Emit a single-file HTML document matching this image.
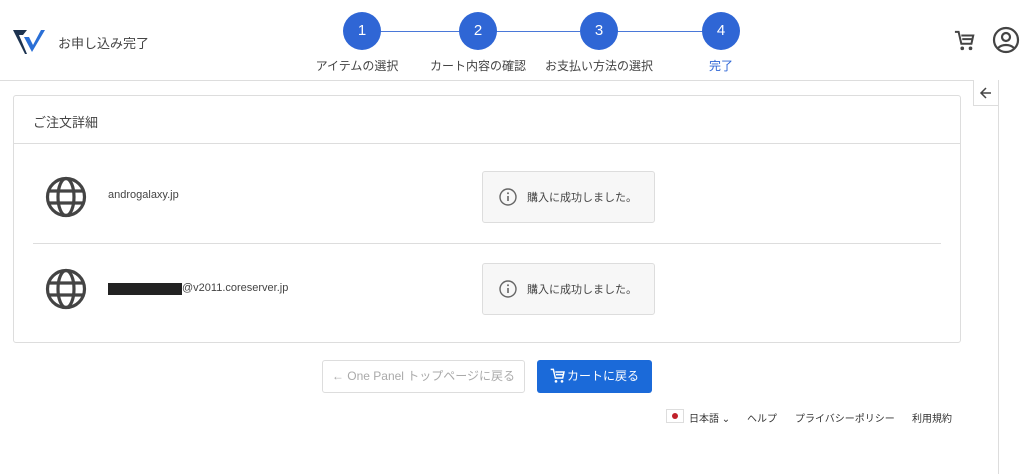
<!DOCTYPE html>
<html><head><meta charset="utf-8"><style>
*{box-sizing:border-box;margin:0;padding:0}
body{width:1024px;height:474px;background:#fff;font-family:"Liberation Sans","Noto Sans CJK JP",sans-serif;color:#333;position:relative;overflow:hidden}
.a{position:absolute}
.circ{position:absolute;width:38px;height:38px;border-radius:50%;background:#2f66d5;color:#fff;font-size:15px;text-align:center;line-height:38px;top:12px}
.line{position:absolute;top:31px;height:1px;background:#4a78d8}
.lab{position:absolute;top:57px;font-size:12px;color:#444;white-space:nowrap;transform:translateX(-50%)}
.msg{position:absolute;left:482px;width:173px;height:52px;border:1px solid #ddd;border-radius:3px;background:#f7f7f7;font-size:11px;color:#444;display:flex;align-items:center}
.msg svg{margin:0 10px 0 16px}
</style></head><body>
<div class="a" style="left:0;top:80px;width:998px;height:1px;background:#ddd"></div>
<div class="a" style="left:998px;top:80px;width:1px;height:394px;background:#ddd"></div>
<div class="a" style="left:973px;top:80px;width:26px;height:26px;border:1px solid #ddd;border-top:none;background:#fff"></div>
<svg class="a" style="left:979px;top:86px" width="14" height="14" viewBox="0 0 14 14"><path d="M12 7H2M7 2L2 7l5 5" stroke="#444" stroke-width="1.5" fill="none"/></svg>
<svg class="a" style="left:13px;top:28px" width="32" height="28" viewBox="0 0 32 28"><path d="M0 2h14l-4 5H6l8 19L12 26z" fill="#1d3350"/><path d="M11 9h5l4 8 8-15h4L19 24z" fill="#2a6fd6"/></svg>
<div class="a" style="left:58px;top:33px;font-size:13px;color:#444">お申し込み完了</div>
<div class="line" style="left:380px;width:80px"></div>
<div class="line" style="left:496px;width:84px"></div>
<div class="line" style="left:617px;width:86px"></div>
<div class="circ" style="left:343px">1</div>
<div class="circ" style="left:459px">2</div>
<div class="circ" style="left:580px">3</div>
<div class="circ" style="left:702px">4</div>
<div class="lab" style="left:357px">アイテムの選択</div>
<div class="lab" style="left:478px">カート内容の確認</div>
<div class="lab" style="left:599px">お支払い方法の選択</div>
<div class="lab" style="left:721px;color:#2f66d5">完了</div>
<svg class="a" style="left:954px;top:30px" width="22" height="22" viewBox="0 0 24 24"><path d="M1 2h4l3 13h11l2-9H8M9 10h11" stroke="#444" stroke-width="2.2" fill="none"/><circle cx="9" cy="20" r="2" fill="#444"/><circle cx="18" cy="20" r="2" fill="#444"/></svg>
<svg class="a" style="left:992px;top:26px" width="28" height="28" viewBox="0 0 28 28"><circle cx="14" cy="14" r="12" stroke="#444" stroke-width="2.2" fill="none"/><circle cx="14" cy="11" r="4" stroke="#444" stroke-width="2.2" fill="none"/><path d="M6 22c4-4 12-4 16 0" stroke="#444" stroke-width="2.2" fill="none"/></svg>
<div class="a" style="left:13px;top:95px;width:948px;height:248px;border:1px solid #ddd;border-radius:3px"></div>
<div class="a" style="left:13px;top:143px;width:948px;height:1px;background:#ddd"></div>
<div class="a" style="left:33px;top:112px;font-size:13px;color:#444">ご注文詳細</div>
<div class="a" style="left:33px;top:243px;width:908px;height:1px;background:#ddd"></div>
<svg class="a" style="left:45px;top:176px" width="42" height="42" viewBox="0 0 42 42"><g stroke="#444" stroke-width="3.2" fill="none"><circle cx="21" cy="21" r="18.5"/><ellipse cx="21" cy="21" rx="8" ry="18.5"/><path d="M3 15h36M3 27h36"/></g></svg>
<svg class="a" style="left:45px;top:268px" width="42" height="42" viewBox="0 0 42 42"><g stroke="#444" stroke-width="3.2" fill="none"><circle cx="21" cy="21" r="18.5"/><ellipse cx="21" cy="21" rx="8" ry="18.5"/><path d="M3 15h36M3 27h36"/></g></svg>
<div class="a" style="left:108px;top:189px;font-size:11px;color:#444">androgalaxy.jp</div>
<div class="a" style="left:108px;top:283px;width:74px;height:12px;background:#222"></div>
<div class="a" style="left:182px;top:282px;font-size:11px;color:#444">@v2011.coreserver.jp</div>
<div class="msg" style="top:171px"><svg width="18" height="18" viewBox="0 0 18 18"><circle cx="9" cy="9" r="8" stroke="#666" stroke-width="1.4" fill="none"/><path d="M9 8v5" stroke="#666" stroke-width="1.6"/><circle cx="9" cy="5.3" r="1" fill="#666"/></svg>購入に成功しました。</div>
<div class="msg" style="top:263px"><svg width="18" height="18" viewBox="0 0 18 18"><circle cx="9" cy="9" r="8" stroke="#666" stroke-width="1.4" fill="none"/><path d="M9 8v5" stroke="#666" stroke-width="1.6"/><circle cx="9" cy="5.3" r="1" fill="#666"/></svg>購入に成功しました。</div>
<div class="a" style="left:322px;top:360px;width:203px;height:33px;border:1px solid #ddd;border-radius:3px;font-size:12px;color:#aaa;line-height:31px;text-align:center">← One Panel トップページに戻る</div>
<div class="a" style="left:537px;top:360px;width:115px;height:33px;background:#1b6ad9;border-radius:3px;font-size:12px;color:#fff;line-height:33px;padding-left:30px">カートに戻る</div>
<svg class="a" style="left:550px;top:368px" width="16" height="16" viewBox="0 0 24 24"><path d="M1 2h4l3 13h11l2-9H8M9 10h11" stroke="#fff" stroke-width="2.2" fill="none"/><circle cx="9" cy="20" r="2" fill="#fff"/><circle cx="18" cy="20" r="2" fill="#fff"/></svg>
<div class="a" style="left:666px;top:409px;width:18px;height:14px;border:1px solid #ddd;background:#fff"></div>
<div class="a" style="left:672px;top:413px;width:6px;height:6px;border-radius:50%;background:#c0202a"></div>
<div class="a" style="left:689px;top:410px;font-size:10px;color:#333">日本語 ⌄</div>
<div class="a" style="left:747px;top:410px;font-size:10px;color:#333">ヘルプ</div>
<div class="a" style="left:795px;top:410px;font-size:10px;color:#333">プライバシーポリシー</div>
<div class="a" style="left:912px;top:410px;font-size:10px;color:#333">利用規約</div>
</body></html>
